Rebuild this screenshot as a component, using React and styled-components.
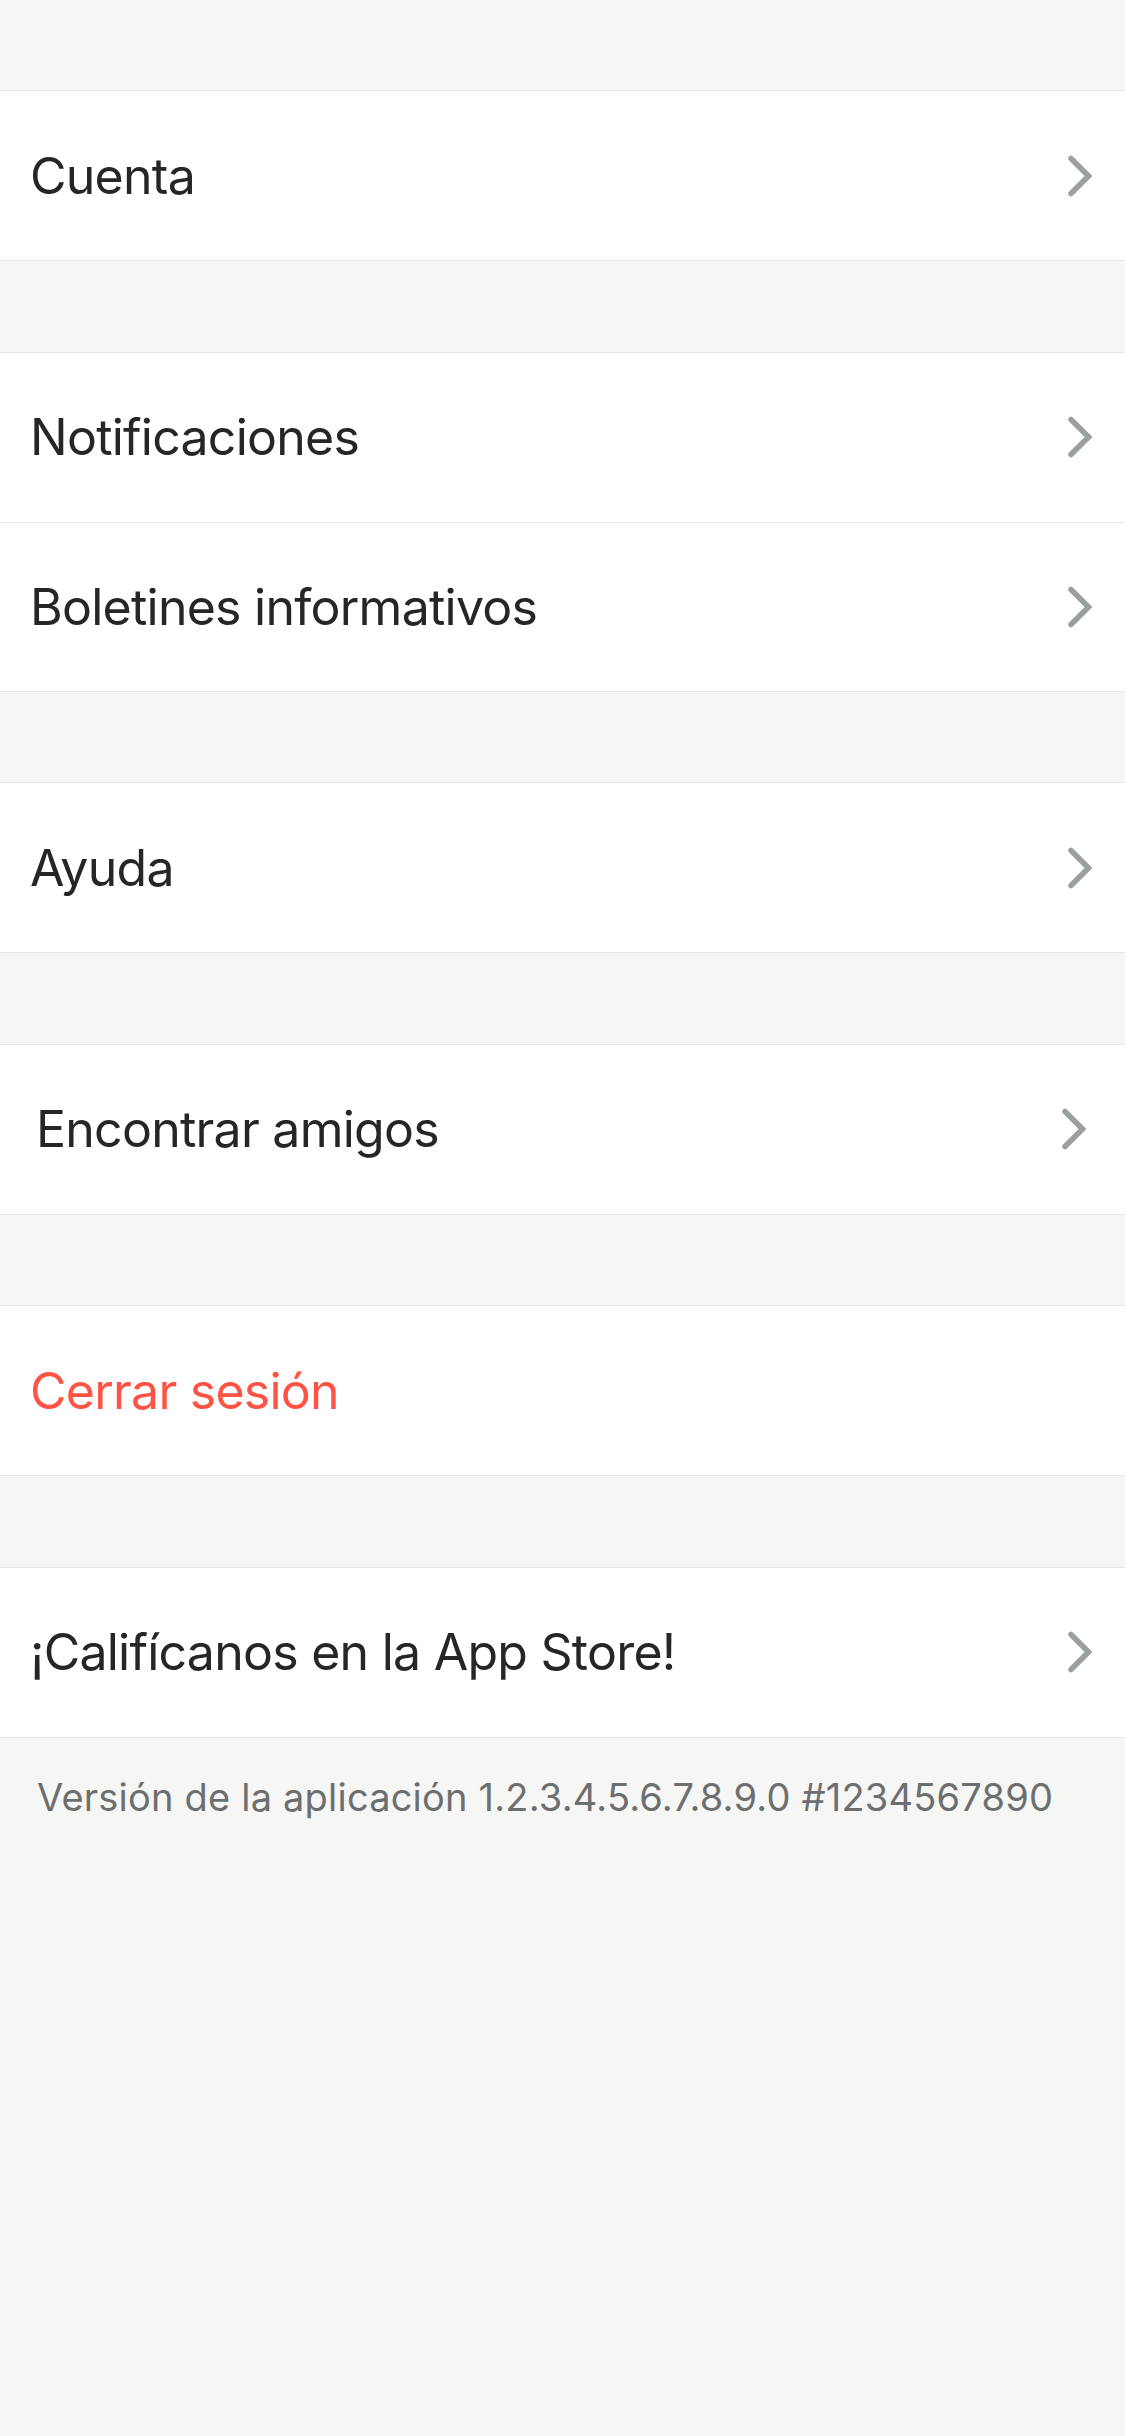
import React from 'react'
import styled, { createGlobalStyle } from 'styled-components'

const Global = createGlobalStyle`
  html, body {
    margin: 0;
    padding: 0;
    background: #f6f6f5;
  }
  body {
    font-family: Inter, "Noto Sans", "Liberation Sans", sans-serif;
    -webkit-font-smoothing: antialiased;
  }
`

const Page = styled.div`
  min-height: 2436px;
  background: #f6f6f5;
  padding-top: 90px;
  box-sizing: border-box;
`

const Section = styled.div`
  background: #ffffff;
  border-top: 1px solid #e7e7e6;
  border-bottom: 1px solid #e7e7e6;
  & + & {
    margin-top: 90.5px;
  }
`

const Row = styled.div`
  display: flex;
  align-items: center;
  justify-content: space-between;
  height: 169px;
  box-sizing: border-box;
  padding: 0 ${p => (p.$inset ? 39 : 33)}px 0 ${p => (p.$inset ? 36 : 30)}px;
  & + & {
    border-top: 1px solid #e7e7e6;
  }
`

const Label = styled.span`
  font-size: 50px;
  font-weight: 400;
  letter-spacing: -0.75px;
  color: ${p => (p.$danger ? '#ff5443' : '#262626')};
`

const Chevron = styled.svg`
  width: 24px;
  height: 42px;
  flex: none;
`

const Version = styled.div`
  padding: 36px 0 0 37px;
  font-size: 38px;
  letter-spacing: 0.2px;
  color: #6c6f70;
`

const Arrow = () => (
  <Chevron viewBox="0 0 24 42">
    <polyline
      points="3,3.5 20.5,21 3,38.5"
      fill="none"
      stroke="#9b9f9f"
      strokeWidth="5.5"
      strokeLinecap="round"
      strokeLinejoin="miter"
    />
  </Chevron>
)

const sections = [
  [{ label: 'Cuenta' }],
  [{ label: 'Notificaciones' }, { label: 'Boletines informativos' }],
  [{ label: 'Ayuda' }],
  [{ label: 'Encontrar amigos', inset: true }],
  [{ label: 'Cerrar sesión', danger: true, noArrow: true }],
  [{ label: '¡Califícanos en la App Store!' }],
]

export default function App() {
  return (
    <Page>
      <Global />
      {sections.map((rows, i) => (
        <Section key={i}>
          {rows.map(r => (
            <Row key={r.label} $inset={r.inset}>
              <Label $danger={r.danger}>{r.label}</Label>
              {!r.noArrow && <Arrow />}
            </Row>
          ))}
        </Section>
      ))}
      <Version>Versión de la aplicación 1.2.3.4.5.6.7.8.9.0 #1234567890</Version>
    </Page>
  )
}
